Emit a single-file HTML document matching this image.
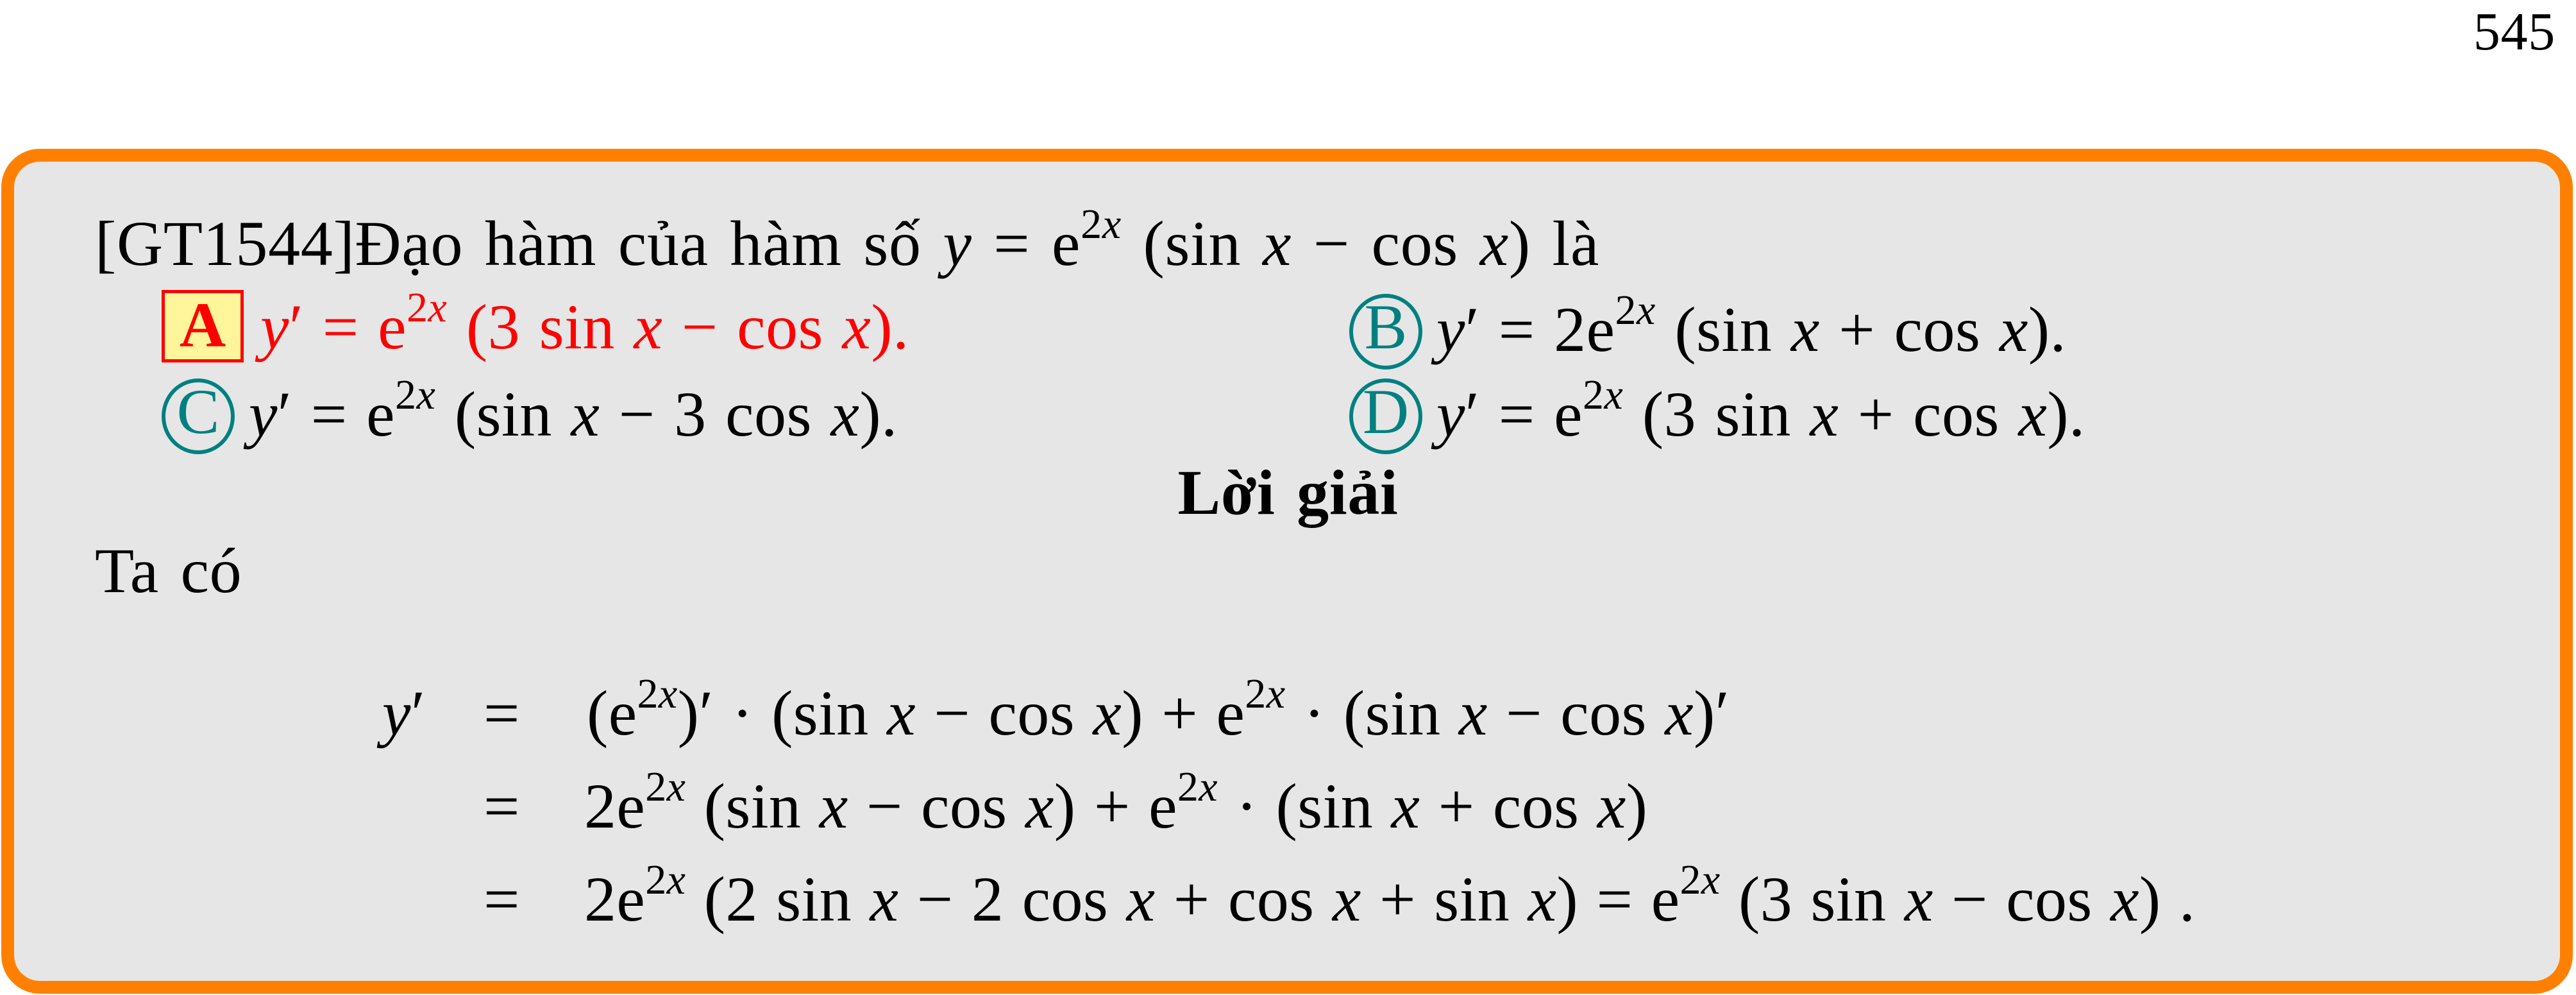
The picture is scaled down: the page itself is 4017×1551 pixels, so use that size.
<!DOCTYPE html>
<html><head><meta charset="utf-8"><style>
body{margin:0;width:4017px;height:1551px;background:#fff;position:relative;overflow:hidden;font-family:"Liberation Serif",serif;font-size:100px;color:#000}
.l{position:absolute;white-space:nowrap;line-height:1;word-spacing:8px;letter-spacing:0.7px}
.m{word-spacing:4px;letter-spacing:0.5px}
.e{word-spacing:3px;letter-spacing:0.4px}
i{font-style:italic}
sup{font-size:66px;vertical-align:0;position:relative;top:-42px;font-style:italic}
sup b{font-weight:normal;font-style:normal}
.box{position:absolute;left:2px;top:232px;width:3970px;height:1277px;border:20px solid #ff8000;border-radius:60px;background:#e6e6e6}
.circ,.sq{display:inline-block;position:relative;box-sizing:border-box;letter-spacing:0}
.circ{width:114px;height:118px;border:6px solid #008080;border-radius:50%;color:#008080;vertical-align:-29px;margin-right:22px}
.sq{width:128px;height:113px;border:5px solid #f00;background:#fff59a;color:#f00;font-weight:bold;vertical-align:-22px;margin-right:26px}
.circ span,.sq span{position:absolute;left:0;right:0;text-align:center;line-height:100px;top:-4px}
.sq span{top:0}
</style></head><body>
<div class="l" style="right:32px;top:8px;font-size:84px">545</div>
<div class="box"></div>
<div class="l" style="left:148px;top:330px">[GT1544]Đạo hàm của hàm số <i>y</i> = e<sup><b>2</b>x</sup> (sin <i>x</i> − cos <i>x</i>) là</div>
<div class="l m" style="left:252px;top:452px;color:#f00"><span class="sq"><span>A</span></span><i>y</i>′ = e<sup><b>2</b>x</sup> (3 sin <i>x</i> − cos <i>x</i>).</div>
<div class="l m" style="left:2104px;top:458px"><span class="circ"><span>B</span></span><i>y</i>′ = 2e<sup><b>2</b>x</sup> (sin <i>x</i> + cos <i>x</i>).</div>
<div class="l m" style="left:252px;top:590px"><span class="circ"><span>C</span></span><i>y</i>′ = e<sup><b>2</b>x</sup> (sin <i>x</i> − 3 cos <i>x</i>).</div>
<div class="l m" style="left:2104px;top:590px"><span class="circ"><span>D</span></span><i>y</i>′ = e<sup><b>2</b>x</sup> (3 sin <i>x</i> + cos <i>x</i>).</div>
<div class="l" style="left:0;width:4017px;text-align:center;top:718px;font-weight:bold">Lời giải</div>
<div class="l" style="left:148px;top:840px">Ta có</div>
<div class="l" style="left:596px;top:1062px"><i>y</i>′</div>
<div class="l" style="left:754px;top:1062px">=</div>
<div class="l e" style="left:915px;top:1062px">(e<sup><b>2</b>x</sup>)′ · (sin <i>x</i> − cos <i>x</i>) + e<sup><b>2</b>x</sup> · (sin <i>x</i> − cos <i>x</i>)′</div>
<div class="l" style="left:754px;top:1207px">=</div>
<div class="l e" style="left:911px;top:1207px">2e<sup><b>2</b>x</sup> (sin <i>x</i> − cos <i>x</i>) + e<sup><b>2</b>x</sup> · (sin <i>x</i> + cos <i>x</i>)</div>
<div class="l" style="left:754px;top:1352px">=</div>
<div class="l e" style="left:911px;top:1352px">2e<sup><b>2</b>x</sup> (2 sin <i>x</i> − 2 cos <i>x</i> + cos <i>x</i> + sin <i>x</i>) = e<sup><b>2</b>x</sup> (3 sin <i>x</i> − cos <i>x</i>) .</div>
</body></html>
